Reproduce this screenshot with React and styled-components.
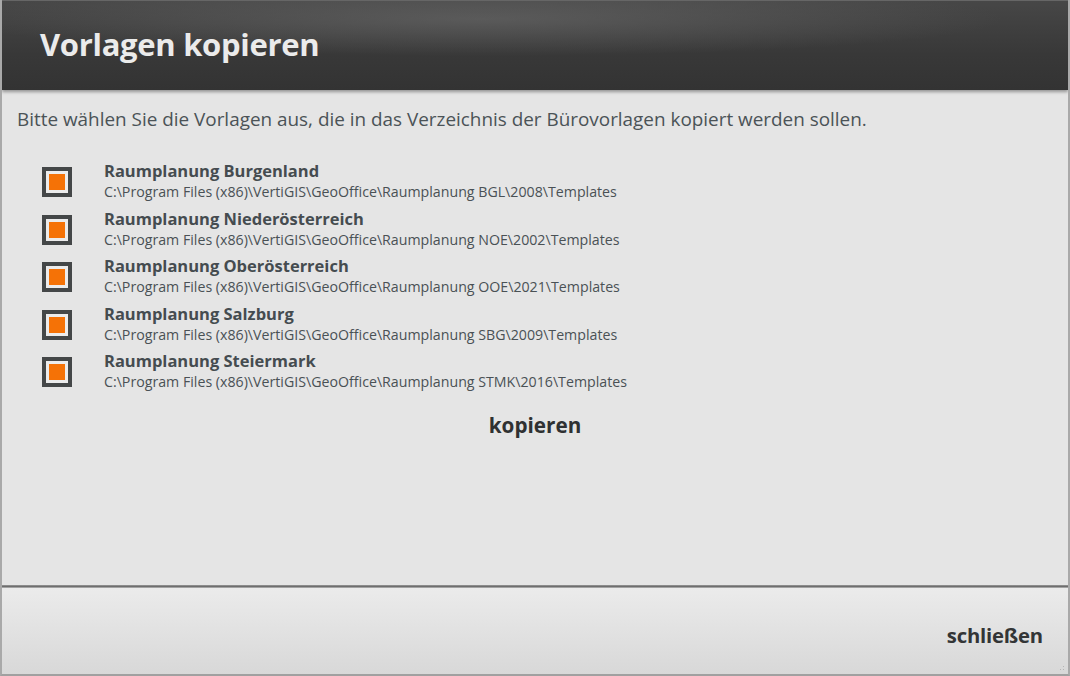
import React from "react";
import styled, { createGlobalStyle } from "styled-components";

const GlobalStyle = createGlobalStyle`
  html, body { margin: 0; padding: 0; background: #e4e4e4; }
  body { font-family: "Open Sans", "Noto Sans", sans-serif; }
  * { box-sizing: border-box; }
`;

const templates = [
  { name: "Raumplanung Burgenland", path: "C:\\Program Files (x86)\\VertiGIS\\GeoOffice\\Raumplanung BGL\\2008\\Templates" },
  { name: "Raumplanung Niederösterreich", path: "C:\\Program Files (x86)\\VertiGIS\\GeoOffice\\Raumplanung NOE\\2002\\Templates" },
  { name: "Raumplanung Oberösterreich", path: "C:\\Program Files (x86)\\VertiGIS\\GeoOffice\\Raumplanung OOE\\2021\\Templates" },
  { name: "Raumplanung Salzburg", path: "C:\\Program Files (x86)\\VertiGIS\\GeoOffice\\Raumplanung SBG\\2009\\Templates" },
  { name: "Raumplanung Steiermark", path: "C:\\Program Files (x86)\\VertiGIS\\GeoOffice\\Raumplanung STMK\\2016\\Templates" },
];

const Window = styled.div`
  width: 1070px;
  height: 676px;
  display: flex;
  flex-direction: column;
  background: #e5e5e5;
  border-left: 2px solid #a9a9a9;
  border-right: 2px solid #a9a9a9;
  border-bottom: 2px solid #a0a0a0;
  overflow: hidden;
`;

const Header = styled.div`
  height: 90px;
  flex: none;
  display: flex;
  align-items: center;
  padding: 0 0 4px 38px;
  background:
    radial-gradient(ellipse 70% 60% at 45% 20%, rgba(110, 110, 110, 0.55), rgba(110, 110, 110, 0) 70%),
    linear-gradient(#474747, #383838 60%, #333333);
  border-top: 1px solid #666;
  box-shadow: 0 2px 3px rgba(0, 0, 0, 0.35);
`;

const Title = styled.h1`
  margin: 0;
  font-size: 31px;
  font-weight: 700;
  color: #ebebeb;
  letter-spacing: -0.3px;
`;

const Body = styled.div`
  flex: 1;
  display: flex;
  flex-direction: column;
  padding: 16px 0 0 15px;
`;

const Intro = styled.p`
  margin: 0 0 27px;
  font-size: 18.9px;
  line-height: 26px;
  color: #4b5357;
`;

const List = styled.div`
  display: flex;
  flex-direction: column;
  gap: 3px;
  padding-left: 25px;
`;

const Row = styled.label`
  display: flex;
  align-items: center;
  gap: 32px;
  height: 44.5px;
`;

const Check = styled.span`
  width: 30px;
  height: 30px;
  flex: none;
  display: flex;
  align-items: center;
  justify-content: center;
  border: 4px solid #444748;
  background: #ececec;
  margin-top: 2px;
  &::after {
    content: "";
    width: 16px;
    height: 16px;
    background: ${(p) => (p.checked ? "#f57206" : "transparent")};
  }
`;

const Texts = styled.div`
  display: flex;
  flex-direction: column;
`;

const Name = styled.div`
  font-size: 16.5px;
  font-weight: 700;
  color: #454c50;
  line-height: 22px;
`;

const Path = styled.div`
  font-size: 14.2px;
  color: #4a5155;
  line-height: 20px;
`;

const CopyButton = styled.button`
  align-self: center;
  margin: 17px 0 0 -15px;
  padding: 0;
  border: none;
  background: transparent;
  font-family: inherit;
  font-size: 20.7px;
  line-height: 28px;
  font-weight: 700;
  color: #2f3132;
  cursor: pointer;
`;

const Separator = styled.div`
  height: 3px;
  flex: none;
  background: linear-gradient(#9a9a9a, #6e6e6e 50%, #bdbdbd);
`;

const Footer = styled.div`
  height: 86px;
  flex: none;
  position: relative;
  display: flex;
  align-items: center;
  justify-content: flex-end;
  padding: 8px 25px 0 0;
  background: linear-gradient(#ebebeb, #d8d8d8);
`;

const CloseButton = styled.button`
  padding: 0;
  border: none;
  background: transparent;
  font-family: inherit;
  font-size: 20.3px;
  font-weight: 700;
  color: #333536;
  letter-spacing: -0.2px;
  cursor: pointer;
`;

const Grip = styled.span`
  position: absolute;
  right: 2px;
  bottom: 2px;
  width: 10px;
  height: 10px;
  background-image: radial-gradient(circle, #b5b5b5 0.8px, transparent 1px);
  background-size: 3px 3px;
  clip-path: polygon(100% 0, 100% 100%, 0 100%);
`;

export default function App() {
  return (
    <>
      <GlobalStyle />
      <Window>
        <Header>
          <Title>Vorlagen kopieren</Title>
        </Header>
        <Body>
          <Intro>Bitte wählen Sie die Vorlagen aus, die in das Verzeichnis der Bürovorlagen kopiert werden sollen.</Intro>
          <List>
            {templates.map((t) => (
              <Row key={t.name}>
                <Check checked />
                <Texts>
                  <Name>{t.name}</Name>
                  <Path>{t.path}</Path>
                </Texts>
              </Row>
            ))}
          </List>
          <CopyButton>kopieren</CopyButton>
        </Body>
        <Separator />
        <Footer>
          <CloseButton>schließen</CloseButton>
          <Grip />
        </Footer>
      </Window>
    </>
  );
}
